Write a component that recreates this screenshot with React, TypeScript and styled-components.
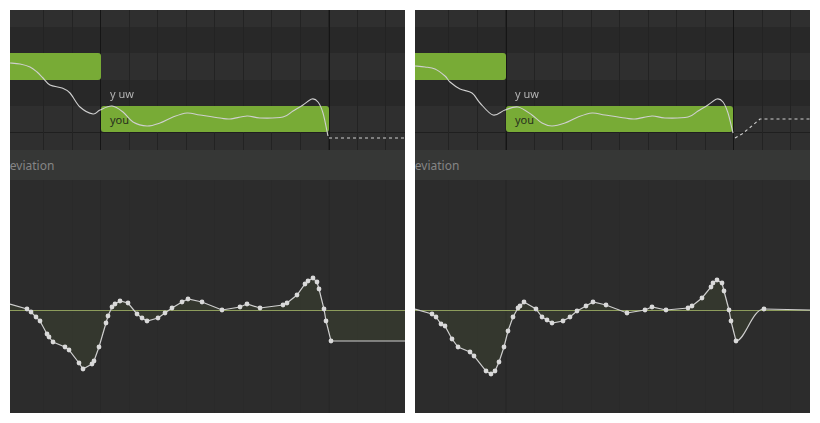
import * as React from 'react';
import styled, {createGlobalStyle} from 'styled-components';

type Pt = [number, number];

type PanelData = {
  x0: number
  pitch: Pt[]
  tail: Pt[]
  dots: Pt[]
  lineStart: Pt
}

const GlobalStyle = createGlobalStyle`
  html, body {
    margin: 0;
    padding: 0;
    background: #ffffff;
    font-family: "Noto Sans", "DejaVu Sans", sans-serif;
    -webkit-font-smoothing: antialiased;
  }
`;

const Page = styled.div`
  display: flex;
  gap: 10px;
  padding: 10px;
  width: 820px;
  height: 423px;
  box-sizing: border-box;
`;

const Panel = styled.div`
  display: flex;
  flex-direction: column;
  width: 395px;
  height: 403px;
  overflow: hidden;
  background: #2d2d2d;
`;

const PianoRoll = styled.div`
  position: relative;
  display: flex;
  flex-direction: column;
  height: 140px;
  flex: none;
  overflow: hidden;
`;

const KeyRow = styled.div<{ $h: number; $dark?: boolean; $split?: boolean }>`
  height: ${p => p.$h}px;
  flex: none;
  box-sizing: border-box;
  background: ${p => (p.$dark ? '#282828' : '#2f2f2f')};
  border-top: ${p => (p.$split ? '1px solid #1f1f1f' : 'none')};
`;

const BeatLines = styled.div<{ $beat: string; $bar: string }>`
  position: absolute;
  inset: 0;
  pointer-events: none;
  background-image:
    linear-gradient(to right, transparent 90.5px, ${p => p.$bar} 90.5px, ${p => p.$bar} 91.5px, transparent 91.5px),
    linear-gradient(to right, transparent 318.5px, ${p => p.$bar} 318.5px, ${p => p.$bar} 319.5px, transparent 319.5px),
    repeating-linear-gradient(to right, transparent 0, transparent 27.5px, ${p => p.$beat} 27.5px, ${p => p.$beat} 28.5px);
  background-position: 0 0, 0 0, 6px 0;
`;

const Note = styled.div<{ $x: number; $y: number; $w: number; $h: number }>`
  position: absolute;
  left: ${p => p.$x}px;
  top: ${p => p.$y}px;
  width: ${p => p.$w}px;
  height: ${p => p.$h}px;
  background: #78ab36;
  border-radius: 3px;
  display: flex;
  align-items: center;
  padding-left: 9px;
  box-sizing: border-box;
  font-size: 11px;
  color: #27301d;
`;

const Lyric = styled.span<{ $x: number; $y: number }>`
  position: absolute;
  left: ${p => p.$x}px;
  top: ${p => p.$y}px;
  height: 26px;
  display: flex;
  align-items: center;
  font-size: 11px;
  color: #b4b4b4;
  transform: translateZ(0);
`;

const Overlay = styled.svg`
  position: absolute;
  left: 0;
  top: 0;
  pointer-events: none;
`;

const Band = styled.div`
  height: 30px;
  flex: none;
  display: flex;
  align-items: center;
  background: #363736;
  overflow: hidden;
`;

const BandLabel = styled.span`
  margin-left: -9px;
  font-size: 12px;
  color: #858585;
  white-space: nowrap;
`;

const Graph = styled.div`
  position: relative;
  flex: 1;
  background-color: #2c2c2c;
  background-image:
    linear-gradient(to right, transparent 90.5px, #282828 90.5px, #282828 91.5px, transparent 91.5px),
    linear-gradient(to right, transparent 318.5px, #282828 318.5px, #282828 319.5px, transparent 319.5px),
    repeating-linear-gradient(to right, transparent 0, transparent 27.5px, #2a2a2a 27.5px, #2a2a2a 28.5px);
  background-position: 0 0, 0 0, 6px 0;
`;

const Chart = styled.svg`
  display: block;
`;

const smooth = (pts: Pt[]) => {
  let d = `M${pts[0][0]},${pts[0][1]}`;
  for (let i = 0; i < pts.length - 1; i++) {
    const p0 = pts[i - 1] || pts[i];
    const p1 = pts[i];
    const p2 = pts[i + 1];
    const p3 = pts[i + 2] || p2;
    const c1 = [p1[0] + (p2[0] - p0[0]) / 6, p1[1] + (p2[1] - p0[1]) / 6];
    const c2 = [p2[0] - (p3[0] - p1[0]) / 6, p2[1] - (p3[1] - p1[1]) / 6];
    d += ` C${c1[0]},${c1[1]} ${c2[0]},${c2[1]} ${p2[0]},${p2[1]}`;
  }
  return d;
};

const pitchTail: Pt[] = [
  [147, 126], [160, 123], [173, 117], [187, 113], [200, 115], [220, 118], [230, 119],
  [247, 116], [260, 118], [283, 117], [293, 111], [303, 105], [312, 99], [318, 102],
  [323, 113], [328, 136],
];

const PANELS: PanelData[] = [
  {
    x0: 10,
    pitch: [
      [10, 63], [20, 64], [30, 67], [37, 72], [43, 78], [50, 85], [62, 88], [70, 93],
      [80, 107], [93, 114], [100, 110], [112, 106], [123, 112], [133, 122], ...pitchTail,
    ],
    tail: [[329, 138], [405, 138]],
    lineStart: [10, 304],
    dots: [
      [27, 309], [31, 312], [36, 317], [40, 321], [47, 334], [49, 337], [53, 342], [65, 347],
      [69, 350], [79, 363], [83, 369], [92, 364], [94, 361], [99, 347], [106, 323], [108, 316],
      [112, 307], [115, 304], [120, 301], [128, 303], [137, 314], [142, 318], [147, 321],
      [158, 318], [165, 313], [172, 308], [182, 302], [188, 299], [202, 302], [222, 310],
      [240, 307], [247, 304], [260, 308], [283, 305], [287, 303], [297, 295], [305, 284],
      [308, 281], [313, 278], [317, 282], [319, 289], [324, 309], [326, 321], [331, 341],
    ],
  },
  {
    x0: 415,
    pitch: [
      [415, 66], [425, 67], [435, 69], [445, 76], [450, 82], [460, 89], [472, 93], [480, 103],
      [493, 115], [505, 110], [518, 107], [532, 115], [542, 123], ...pitchTail.map(([x, y]) => [x + 405, y] as Pt),
    ].map(([x, y], i, a) => (i === a.length - 1 ? [733, 133] : [x, y]) as Pt),
    tail: [[735, 138], [742, 134], [753, 125], [760, 119], [810, 119]],
    lineStart: [415, 309],
    dots: [
      [432, 314], [436, 317], [441, 324], [445, 326], [452, 339], [458, 347], [470, 352],
      [474, 356], [486, 371], [491, 374], [495, 371], [499, 362], [504, 347], [508, 331],
      [513, 317], [518, 308], [520, 306], [524, 302], [536, 309], [542, 317], [547, 320],
      [552, 323], [563, 321], [570, 317], [577, 311], [586, 306], [593, 302], [606, 305],
      [627, 313], [645, 310], [652, 307], [666, 310], [688, 308], [692, 306], [702, 298],
      [711, 287], [713, 283], [717, 280], [722, 283], [724, 291], [729, 310], [731, 321],
      [736, 341], [764, 309],
    ],
  },
];

const ROWS = [
  {h: 17}, {h: 26, dark: true}, {h: 27}, {h: 26, dark: true}, {h: 26}, {h: 18, split: true},
];

const EditorPanel: React.FC<{ data: PanelData }> = ({data}) => {
  const {x0} = data;
  const rollPt = ([x, y]: Pt): Pt => [x - x0, y - 10];
  const graphPt = ([x, y]: Pt): Pt => [x - x0, y - 180];
  const center = 130;
  const isRight = x0 > 100;

  const dots = data.dots.map(graphPt);
  const start = graphPt(data.lineStart);
  let curve = `M${start[0]},${start[1]}`;
  const straight = isRight ? dots.slice(0, -1) : dots;
  straight.forEach(([x, y]) => { curve += ` L${x},${y}`; });
  if (isRight) {
    const [ax, ay] = dots[dots.length - 2];
    const [bx, by] = dots[dots.length - 1];
    curve += ` C${ax + 9},${ay} ${bx - 12},${by} ${bx},${by}`;
    curve += ` L395,${center}`;
  } else {
    curve += ` L395,${dots[dots.length - 1][1]}`;
  }
  const area = `${curve} L395,${center} L0,${center} Z`;

  return (
    <Panel>
      <PianoRoll>
        {ROWS.map((r, i) => <KeyRow key={i} $h={r.h} $dark={r.dark} $split={r.split}/>)}
        <BeatLines $beat="#232323" $bar="#151515"/>
        <Note $x={-10} $y={43} $w={101} $h={27}/>
        <Lyric $x={100} $y={70}>y uw</Lyric>
        <Note $x={91} $y={96} $w={isRight ? 227 : 228} $h={26}>you</Note>
        <Overlay width={395} height={140}>
          <path d={smooth(data.pitch.map(rollPt))} fill="none" stroke="#cfcfcf" strokeWidth={1.1}/>
          <polyline
            points={data.tail.map(rollPt).map(p => p.join(',')).join(' ')}
            fill="none" stroke="#d0d0d0" strokeWidth={1.1} strokeDasharray="3 3"
          />
        </Overlay>
      </PianoRoll>
      <Band>
        <BandLabel>Deviation</BandLabel>
      </Band>
      <Graph>
        <Chart width={395} height={233}>
          <path d={area} fill="rgba(100,120,60,0.16)"/>
          <line x1={0} x2={395} y1={center + 0.5} y2={center + 0.5} stroke="#8d9c5c" strokeWidth={1}/>
          <path d={curve} fill="none" stroke="#cfcfcf" strokeWidth={1.2}/>
          {dots.map(([x, y], i) => <circle key={i} cx={x} cy={y} r={2.4} fill="#d9d9d9"/>)}
        </Chart>
      </Graph>
    </Panel>
  );
};

const App: React.FC = () => (
  <>
    <GlobalStyle/>
    <Page>
      {PANELS.map(p => <EditorPanel key={p.x0} data={p}/>)}
    </Page>
  </>
);

export default App;
